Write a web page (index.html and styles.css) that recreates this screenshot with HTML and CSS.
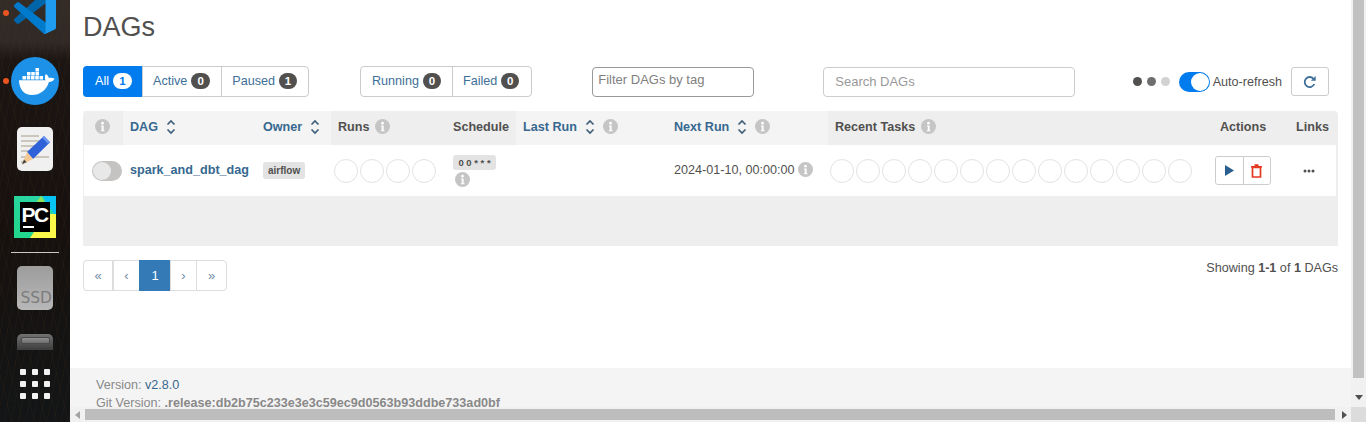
FILE: index.html
```html
<!DOCTYPE html>
<html lang="en">
<head>
<meta charset="utf-8">
<title>DAGs - Airflow</title>
<link rel="stylesheet" href="styles.css">
</head>
<body>
<svg class="defs" width="0" height="0" aria-hidden="true">
  <symbol id="info" viewBox="0 0 16 16"><circle cx="8" cy="8" r="8" fill="currentColor"/><circle cx="8" cy="4.4" r="1.5" fill="#fff"/><path d="M6.3 6.8h2.9v5.1h1v1.2H6.2v-1.2h1V8H6.3z" fill="#fff"/></symbol>
  <symbol id="sort" viewBox="0 0 10 18"><path d="M1.5 6.5 5 3l3.5 3.5M1.5 11.5 5 15l3.5-3.5" fill="none" stroke="currentColor" stroke-width="1.7"/></symbol>
</svg>
<aside class="dock">
  <div class="dock-item vscode">
    <i class="run-dot"></i>
    <svg width="42" height="42" viewBox="0 0 100 100"><path fill="#0065a9" d="M96.5 10.8 75.9.9a6.2 6.2 0 0 0-7.1 1.2L1.3 63.6a4.2 4.2 0 0 0 0 6.2l5.500 5a4.2 4.2 0 0 0 5.300.2L93.200 13.500c2.700-2 6.800-.1 6.800 3.300v-.3a6.300 6.300 0 0 0-3.500-5.700Z"/><path fill="#007acc" d="m96.500 89.200-20.600 9.900a6.200 6.200 0 0 1-7.100-1.200L1.300 36.400a4.200 4.200 0 0 1 0-6.200l5.500-5a4.200 4.200 0 0 1 5.300-.2l81.100 61.500c2.700 2 6.800.1 6.800-3.300v.3a6.300 6.300 0 0 1-3.500 5.700Z"/><path fill="#1f9cf0" d="M75.900 99.100a6.200 6.200 0 0 1-7.100-1.200c2.300 2.300 6.200.7 6.200-2.600V4.700c0-3.300-3.900-4.900-6.200-2.600a6.200 6.200 0 0 1 7.100-1.200l20.600 9.900a6.200 6.200 0 0 1 3.500 5.600v67.200a6.200 6.200 0 0 1-3.500 5.600Z"/></svg>
  </div>
  <div class="dock-item docker">
    <i class="run-dot"></i>
    <svg width="48" height="48" viewBox="0 0 48 48"><circle cx="24" cy="24" r="24" fill="#1d91e8"/><g fill="#fff"><rect x="24.500" y="11" width="3.500" height="3.500"/><rect x="16" y="15" width="3.500" height="3.500"/><rect x="20.250" y="15" width="3.500" height="3.500"/><rect x="24.500" y="15" width="3.500" height="3.500"/><rect x="11.500" y="19" width="3.500" height="3.500"/><rect x="15.750" y="19" width="3.500" height="3.500"/><rect x="20" y="19" width="3.500" height="3.500"/><rect x="24.250" y="19" width="3.500" height="3.500"/><rect x="28.500" y="19" width="3.500" height="3.500"/><path d="M8 23.200h26.500c-.9-1.800-.9-4.200.4-6.200 1.500 1 2.700 2.500 3 4 1.800-.6 3.700-.4 5.600.7-1.200 2.300-3.200 3.200-5.600 3.200C35.500 33 29 38 21 38c-8 0-12.800-6-13-14.800Z"/></g></svg>
  </div>
  <div class="dock-item editor">
    <svg width="36" height="44" viewBox="0 0 36 44"><rect width="36" height="44" rx="5" fill="#f0f0f0"/><g fill="#cbc7bc"><rect x="4" y="8" width="18" height="2"/><rect x="4" y="13" width="20" height="2"/><rect x="4" y="18" width="16" height="2"/><rect x="4" y="23" width="12" height="2"/><rect x="4" y="29" width="28" height="2"/><rect x="4" y="34" width="6" height="2"/></g><path d="M10 25 27 9l6 6.200L16 32Z" fill="#2f62d8"/><path d="m27 9 6 6.200-1.800 1.800-6-6.200z" fill="#6a97f2"/><path d="m10 25 6 7-11 5.500z" fill="#f3c892"/><path d="m7 32.500 2.500 2.500-4.500 2.500z" fill="#444"/></svg>
  </div>
  <div class="dock-item pycharm">
    <svg width="42" height="42" viewBox="0 0 42 42"><defs><linearGradient id="pcg" x1="0" y1="1" x2="1" y2="0"><stop offset="0" stop-color="#21d789"/><stop offset="1" stop-color="#2fd5b0"/></linearGradient></defs><rect width="42" height="42" fill="url(#pcg)"/><path d="M29 0h13v20L33 8z" fill="#07c3f2"/><path d="M21 8 27 0l5 8z" fill="#8fe25a"/><path d="M42 18v24H16l16-24z" fill="#fcf84a"/><rect x="6" y="6" width="30" height="30" fill="#000"/><text x="7.500" y="26" class="pc-text">PC</text><rect x="9" y="30" width="11" height="2" fill="#fff"/></svg>
  </div>
  <hr class="dock-sep">
  <div class="dock-item ssd"><span>SSD</span></div>
  <div class="dock-item drive"><i></i></div>
  <div class="apps">
    <i></i><i></i><i></i><i></i><i></i><i></i><i></i><i></i><i></i>
  </div>
</aside>

<div class="window">
  <div class="viewport">
    <main class="page">
      <div class="content">
        <h1 class="title">DAGs</h1>
        <div class="toolbar">
          <div class="pills">
            <a class="pill pill-on">All <b class="count count-on">1</b></a>
            <a class="pill pill-wide">Active <b class="count">0</b></a>
            <a class="pill">Paused <b class="count">1</b></a>
          </div>
          <div class="pills pills-status">
            <a class="pill">Running <b class="count">0</b></a>
            <a class="pill pill-failed">Failed <b class="count">0</b></a>
          </div>
          <div class="tag-filter">Filter DAGs by tag</div>
          <input class="search" type="text" placeholder="Search DAGs">
          <div class="refresh-group">
            <div class="dots"><i class="dot dot-a"></i><i class="dot dot-b"></i><i class="dot dot-c"></i></div>
            <span class="switch switch-on"></span>
            <span class="auto-label">Auto-refresh</span>
            <button class="refresh-btn" type="button" aria-label="Refresh">
              <svg width="14" height="14" viewBox="0 0 14 14"><path d="M11.300 9a5 5 0 1 1-.6-5" fill="none" stroke="#3d6f99" stroke-width="1.800"/><path d="M12.700.9v4.800H7.900z" fill="#3d6f99"/></svg>
            </button>
          </div>
        </div>

        <div class="table-wrap">
          <table class="dags">
            <colgroup>
              <col class="c-toggle"><col class="c-dag"><col class="c-owner"><col class="c-runs"><col class="c-sched"><col class="c-last"><col class="c-next"><col class="c-tasks"><col class="c-actions"><col class="c-links">
            </colgroup>
            <thead>
              <tr>
                <th class="th-toggle"><svg class="ico-info"><use href="#info"/></svg></th>
                <th class="alt"><span class="link">DAG</span><svg class="ico-sort"><use href="#sort"/></svg></th>
                <th class="alt"><span class="link">Owner</span><svg class="ico-sort"><use href="#sort"/></svg></th>
                <th>Runs <svg class="ico-info"><use href="#info"/></svg></th>
                <th>Schedule</th>
                <th class="alt"><span class="link">Last Run</span><svg class="ico-sort"><use href="#sort"/></svg><svg class="ico-info"><use href="#info"/></svg></th>
                <th class="alt"><span class="link">Next Run</span><svg class="ico-sort"><use href="#sort"/></svg><svg class="ico-info"><use href="#info"/></svg></th>
                <th>Recent Tasks <svg class="ico-info"><use href="#info"/></svg></th>
                <th>Actions</th>
                <th>Links</th>
              </tr>
            </thead>
            <tbody>
              <tr>
                <td class="td-toggle"><span class="switch"></span></td>
                <td class="td-text"><a class="dag-name">spark_and_dbt_dag</a></td>
                <td><span class="owner">airflow</span></td>
                <td class="td-runs"><div class="circles"><i></i><i></i><i></i><i></i></div></td>
                <td class="td-sched"><span class="cron">0 0 * * *</span><svg class="ico-info sched-info"><use href="#info"/></svg></td>
                <td></td>
                <td class="td-text next-run">2024-01-10, 00:00:00 <svg class="ico-info"><use href="#info"/></svg></td>
                <td class="td-tasks"><div class="circles"><i></i><i></i><i></i><i></i><i></i><i></i><i></i><i></i><i></i><i></i><i></i><i></i><i></i><i></i></div></td>
                <td class="td-actions">
                  <div class="btn-group">
                    <button class="act" type="button" aria-label="Trigger DAG"><svg width="9" height="11" viewBox="0 0 10 12"><path d="M0 0 10 6 0 12z" fill="#2a5f8f"/></svg></button>
                    <button class="act" type="button" aria-label="Delete DAG"><svg width="11" height="14" viewBox="0 0 11 14"><path d="M0 2h11v1.600H0zM3.500.3h4v1.800h-4z" fill="#e43921"/><path d="M1.500 3.500h8V13h-8z" fill="none" stroke="#e43921" stroke-width="1.700"/></svg></button>
                  </div>
                </td>
                <td class="td-links"><svg class="more" width="12" height="4" viewBox="0 0 12 4"><circle cx="2" cy="2" r="1.500" fill="#51504f"/><circle cx="6" cy="2" r="1.500" fill="#51504f"/><circle cx="10" cy="2" r="1.500" fill="#51504f"/></svg></td>
              </tr>
            </tbody>
          </table>
        </div>

        <div class="below">
          <nav class="pager">
            <a class="pg pg-first">«</a><a class="pg pg-prev">‹</a><a class="pg pg-on">1</a><a class="pg pg-next">›</a><a class="pg pg-last">»</a>
          </nav>
          <p class="showing">Showing <b>1-1</b> of <b>1</b> DAGs</p>
        </div>
      </div>
      <footer class="foot">
        <div>Version: <a class="ver">v2.8.0</a></div>
        <div>Git Version: <b>.release:db2b75c233e3e3c59ec9d0563b93ddbe733ad0bf</b></div>
      </footer>
    </main>
    <div class="vbar">
      <div class="vthumb"></div>
      <div class="varrow"></div>
    </div>
  </div>
  <div class="hbar">
    <i class="harrow harrow-l"></i>
    <div class="hthumb"></div>
    <i class="harrow harrow-r"></i>
    <div class="corner"></div>
  </div>
</div>
</body>
</html>
```
FILE: styles.css
```css
* { box-sizing: border-box; }
html, body { margin: 0; height: 100%; overflow: hidden; }
body {
  display: flex;
  font-family: "Liberation Sans", Arial, sans-serif;
  font-size: 13px;
  color: #51504f;
  background: #fff;
}
.defs { position: absolute; }

/* Desktop dock */
.dock {
  position: relative;
  flex: 0 0 70px;
  height: 422px;
  overflow: hidden;
  display: flex;
  flex-direction: column;
  align-items: center;
  background:
    linear-gradient(180deg, rgba(70,60,54,.55) 0, rgba(70,60,54,.5) 42px, rgba(40,30,24,0) 60px),
    repeating-linear-gradient(101deg, rgba(96,62,32,.10) 0 1px, transparent 1px 7px),
    repeating-linear-gradient(76deg, rgba(120,80,40,.07) 0 1px, transparent 1px 11px),
    linear-gradient(180deg, #1d1714 0, #16110f 55%, #131516 100%);
}
.dock-item { position: relative; flex: none; display: flex; justify-content: center; }
.dock-item svg { display: block; }
.run-dot {
  position: absolute;
  left: -8px;
  top: 50%;
  width: 6px;
  height: 6px;
  margin-top: -3px;
  border-radius: 50%;
  background: #e95420;
}
.vscode { margin-top: -8px; }
.vscode .run-dot { left: -11px; }
.docker { margin-top: 23px; }
.editor { margin-top: 22px; }
.pycharm { margin-top: 25px; }
.pc-text { font: 700 21px "Liberation Sans", sans-serif; fill: #fff; letter-spacing: -1.500px; }
.dock-sep {
  flex: none;
  width: 48px;
  height: 1px;
  margin: 14px 0 0;
  border: 0;
  background: #c8c8c8;
}
.ssd {
  margin-top: 13px;
  width: 36px;
  height: 44px;
  border-radius: 5px;
  background: linear-gradient(180deg, #9c9c9c, #b8b8b8);
  align-items: flex-end;
  justify-content: flex-end;
  overflow: hidden;
}
.ssd span { font: 15.500px "DejaVu Sans", sans-serif; color: #7c7c7c; line-height: 23px; margin-right: 1px; }
.drive {
  margin-top: 24px;
  width: 36px;
  height: 16px;
  border-radius: 5px 5px 0 0;
  background: linear-gradient(180deg, #727272, #3d3d3d);
}
.drive i {
  display: block;
  width: 29px;
  height: 7px;
  margin-top: 3px;
  background: linear-gradient(180deg, #8f8f8f, #6f6f6f);
  border: 1px solid #4a4a4a;
  border-radius: 2px;
}
.apps {
  flex: none;
  display: grid;
  grid-template-columns: repeat(3, 6px);
  grid-auto-rows: 6px;
  gap: 6px;
  margin-top: 19px;
}
.apps i { background: #f2f2f2; border-radius: 1px; }

/* Browser viewport */
.window { flex: 1; min-width: 0; display: flex; flex-direction: column; height: 422px; }
.viewport { flex: 1; min-height: 0; display: flex; }
.page { flex: 1; min-width: 0; display: flex; flex-direction: column; }
.content { flex: 1; min-height: 0; padding: 0 13px; }
.title { margin: 0; padding-top: 13px; font-size: 27px; line-height: 28px; font-weight: 400; color: #51504f; }

.toolbar { display: flex; align-items: flex-start; margin-top: 25px; height: 31px; }
.pills {
  display: flex;
  height: 31px;
  border: 1px solid #cbcbcb;
  border-radius: 4px;
}
.pills-status { margin-left: 51px; }
.pill {
  display: flex;
  align-items: center;
  gap: 4px;
  padding: 0 11px 1px 10px;
  color: #3d6f99;
  font-size: 12.600px;
  border-left: 1px solid #cbcbcb;
}
.pill:first-child { border-left: 0; padding-left: 11px; }
.pill-on.pill-on {
  margin: -1px 0 -1px -1px;
  padding: 0 10px 1px 12px;
  background: #017cee;
  color: #fff;
  border-radius: 4px 0 0 4px;
}
.pill-failed { padding-right: 12px; }
.count {
  min-width: 18px;
  height: 16px;
  padding: 0 5px;
  border-radius: 8px;
  background: #51504f;
  color: #fff;
  font-size: 11.500px;
  line-height: 16px;
  text-align: center;
}
.pill-wide .count { min-width: 19px; }
.count-on { background: #fff; color: #017cee; min-width: 19px; }
.tag-filter {
  width: 162px;
  height: 30px;
  margin: 1px 0 0 60px;
  padding: 4px 5px;
  border: 1px solid #999;
  border-radius: 4px;
  color: #808080;
  font-size: 13px;
  line-height: 15px;
}
.search {
  width: 252px;
  height: 30px;
  margin: 1px 0 0 69px;
  padding: 0 11px 2px;
  border: 1px solid #ccc;
  border-radius: 4px;
  font: 13px "Liberation Sans", sans-serif;
  color: #555;
}
.search::placeholder { color: #999; opacity: 1; }
.refresh-group { display: flex; align-items: center; margin-left: auto; height: 31px; }
.dots { display: flex; gap: 5px; margin-right: 9px; }
.dot { width: 9px; height: 9px; border-radius: 50%; }
.dot-a { background: #51504f; }
.dot-b { background: #6f6e6d; }
.dot-c { background: #d2d2d2; }
.switch {
  position: relative;
  display: block;
  width: 30px;
  height: 20px;
  border-radius: 10px;
  background: #c4c3c1;
}
.switch::after {
  content: "";
  position: absolute;
  left: 1px;
  top: 1px;
  width: 18px;
  height: 18px;
  border-radius: 50%;
  background: #e8e8e8;
}
.switch-on { width: 31px; background: #017cee; margin-right: 3px; }
.switch-on::after { left: 12px; width: 18px; background: #fff; }
.auto-label { font-size: 12.600px; color: #51504f; }
.refresh-btn {
  display: flex;
  align-items: center;
  justify-content: center;
  width: 38px;
  height: 29px;
  margin: 0 9px 0 9px;
  padding: 0;
  border: 1px solid #ccc;
  border-radius: 3px;
  background: #fff;
}

/* Table */
.table-wrap {
  margin: 14px 0 0;
  width: 1255px;
  height: 135px;
  padding: 0 2px 0 1px;
  background: #eee;
  border-radius: 4px 4px 0 0;
}
.dags { width: 1252px; table-layout: fixed; border-collapse: collapse; }
.c-toggle { width: 39px; }
.c-dag { width: 133px; }
.c-owner { width: 75px; }
.c-runs { width: 115px; }
.c-sched { width: 70px; }
.c-last { width: 151px; }
.c-next { width: 161px; }
.c-tasks { width: 385px; }
.c-actions { width: 76px; }
.c-links { width: 47px; }
.dags th {
  height: 34px;
  padding: 0 0 3px 7px;
  text-align: left;
  font-size: 12.600px;
  font-weight: 700;
  white-space: nowrap;
  background: #eee;
  color: #51504f;
}
.dags th.alt { background: #f4f4f4; }
.dags .th-toggle { padding-left: 9px; }
.link { color: #37688f; }
svg.ico-info { display: inline-block; width: 15px; height: 15px; vertical-align: -3px; color: #c6c5c5; }
.dags th .ico-info { margin-left: 2px; }
.ico-sort { display: inline-block; width: 10px; height: 18px; vertical-align: -5px; margin-left: 8px; color: #3f5f7a; }
.dags th .ico-sort + .ico-info { margin-left: 8px; }
.dags td {
  height: 51px;
  padding: 0 0 0 7px;
  background: #fff;
  white-space: nowrap;
  vertical-align: middle;
}
.dags .td-text { padding-bottom: 2px; }
.dags .td-toggle { padding-left: 8px; }
.dag-name { font-weight: 700; color: #37688f; font-size: 12.600px; }
.owner {
  display: inline-block;
  height: 17px;
  padding: 0 5px;
  border-radius: 3px;
  background: #e3e3e3;
  color: #51504f;
  font-size: 10px;
  font-weight: 700;
  line-height: 17px;
}
.circles { display: flex; gap: 2px; }
.circles i { flex: none; width: 24px; height: 24px; border-radius: 50%; border: 1px solid #e2e2e2; }
.dags .td-runs { padding-left: 3px; }
.dags .td-tasks { padding-left: 2px; }
.td-sched .cron {
  display: block;
  width: 43px;
  height: 15px;
  border-radius: 3px;
  background: #e3e3e3;
  font-size: 9.500px;
  font-weight: 700;
  line-height: 15px;
  text-align: center;
}
svg.sched-info { display: block; margin: 2px 0 0 2px; }
.next-run { color: #51504f; font-size: 12.600px; }
.btn-group { display: flex; width: 56px; height: 29px; border: 1px solid #ccc; border-radius: 3px; }
.act { flex: 1; display: flex; align-items: center; justify-content: center; padding: 0; border: 0; background: #fff; border-radius: 3px; }
.act + .act { border-left: 1px solid #ccc; border-radius: 0 3px 3px 0; }
.dags .td-actions { padding-left: 2px; }
.dags .td-links { padding-left: 14px; }
.more { display: block; }

/* Pagination */
.below { display: flex; justify-content: space-between; align-items: flex-start; width: 1255px; margin-top: 14px; }
.pager { display: flex; height: 31px; }
.pg {
  display: flex;
  align-items: center;
  justify-content: center;
  margin-left: -1px;
  border: 1px solid #ddd;
  color: #6f8aa5;
  font-size: 13px;
  background: #fff;
}
.pg-first { width: 31px; margin-left: 0; border-radius: 4px 0 0 4px; border-right-width: 2px; }
.pg-prev { width: 27px; }
.pg-on { width: 32px; background: #337ab7; border-color: #337ab7; color: #fff; }
.pg-next { width: 27px; }
.pg-last { width: 31px; border-radius: 0 4px 4px 0; }
.showing { margin: 0; font-size: 12.600px; line-height: 16px; }

/* Footer */
.foot {
  flex: none;
  height: 39px;
  padding: 8px 0 0 26px;
  background: #f4f4f4;
  color: #888;
  font-size: 12.600px;
  line-height: 18px;
  overflow: hidden;
}
.ver { color: #37688f; }

/* Scrollbars */
.vbar { flex: 0 0 15px; display: flex; flex-direction: column; align-items: center; background: #f1f1f1; }
.vthumb { width: 11px; height: 378px; background: #c1c1c1; }
.varrow {
  width: 0;
  height: 0;
  margin-top: 17px;
  border-left: 4px solid transparent;
  border-right: 4px solid transparent;
  border-top: 5px solid #505050;
}
.hbar { flex: 0 0 15px; display: flex; align-items: center; background: #f1f1f1; position: relative; }
.hthumb { width: 1250px; height: 11px; margin-left: 5px; background: #bdbdbd; }
.harrow { width: 0; height: 0; border-top: 4px solid transparent; border-bottom: 4px solid transparent; }
.harrow-l { margin-left: 5px; border-right: 5px solid #a3a3a3; }
.harrow-r { margin-left: 7px; border-left: 5px solid #505050; }
.corner { margin-left: auto; width: 15px; height: 15px; background: #dcdcdc; }
```
